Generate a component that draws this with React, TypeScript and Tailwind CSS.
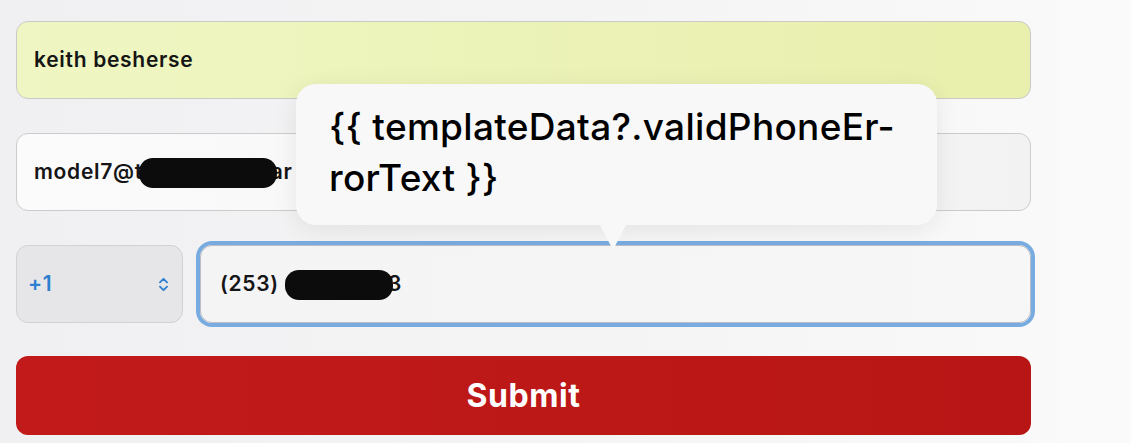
import { ChevronsUpDown } from 'lucide-react';

const Blob = ({ width }: { width: number }) => (
  <span
    className="inline-block h-[30px] rounded-[14px] bg-[#0c0c0c] align-middle blur-[0.6px]"
    style={{ width }}
  />
);

const Tooltip = () => (
  <div className="absolute left-[296px] top-[84px] z-10 w-[641px]">
    <div className="rounded-[20px] bg-[#f8f8f9] pl-[33px] pr-6 pt-[17px] pb-[22px] shadow-[0_4px_24px_rgba(0,0,0,0.08)]">
      <p className="text-[37px] font-medium leading-[51px] tracking-[0.3px] text-black">
        {'{{ templateData?.validPhoneEr-'}
        <br />
        {'rorText }}'}
      </p>
    </div>
    <div className="ml-[304px] h-0 w-0 border-x-[13px] border-t-[25px] border-x-transparent border-t-[#f8f8f9]" />
  </div>
);

export default function App() {
  return (
    <div className="relative h-[443px] w-[1131px] overflow-hidden bg-gradient-to-r from-[#f0f0f2] via-[#f4f4f5] to-[#fafafa] font-['Inter','Liberation_Sans',Arial,sans-serif]">
      <div className="flex w-[1031px] flex-col pl-4 pt-[21px]">
        <div className="flex h-[78px] items-center rounded-xl border border-[#c9c9c9] bg-gradient-to-r from-[#eff6c3] to-[#e9efac] px-[17px]">
          <span className="text-[21px] font-semibold tracking-[0.7px] text-[#151515]">keith besherse</span>
        </div>

        <div className="mt-[34px] flex h-[78px] items-center overflow-hidden rounded-xl border border-[#cbcbcd] bg-gradient-to-r from-[#fbfbfb] to-[#f2f2f3] px-[17px]">
          <span className="whitespace-nowrap text-[21px] font-semibold tracking-[0.7px] text-[#151515]">
            model7@t
            <span className="-ml-[4px] -mr-[6px]">
              <Blob width={138} />
            </span>
            ar
          </span>
        </div>

        <div className="mt-[34px] flex h-[78px] gap-[17px]">
          <div className="flex w-[167px] items-center justify-between rounded-xl border border-[#d2d2d5] bg-[#e6e6e9] pl-[11px] pr-[10px]">
            <span className="text-[21px] font-semibold tracking-[0.5px] text-[#2d7fd0]">+1</span>
            <ChevronsUpDown className="h-[17px] w-[17px] text-[#2d7fd0]" strokeWidth={2.6} />
          </div>
          <div className="flex flex-1 items-center rounded-xl border border-[#bcbcc4] bg-gradient-to-r from-[#f4f4f5] to-[#f7f7f8] px-[19px] ring-4 ring-[#78abe0]">
            <span className="whitespace-nowrap text-[21px] font-semibold tracking-[0.7px] text-[#151515]">
              (253) 6
              <span className="-ml-[14px] -mr-[5px]">
                <Blob width={108} />
              </span>
              3
            </span>
          </div>
        </div>

        <button className="mt-[33px] flex h-[79px] items-center justify-center rounded-xl bg-gradient-to-r from-[#c21a1a] to-[#b81616] text-[32px] font-bold tracking-[0.6px] text-white">
          Submit
        </button>
      </div>

      <Tooltip />
    </div>
  );
}
